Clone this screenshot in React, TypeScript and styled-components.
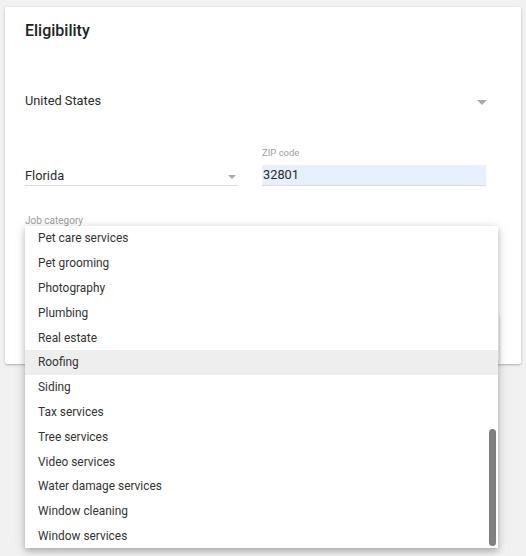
import React from "react";
import styled, { createGlobalStyle } from "styled-components";

const Global = createGlobalStyle`
  html, body { margin: 0; padding: 0; background: #f1f1f1; }
  body { font-family: Roboto, "Noto Sans", Arial, sans-serif; }
  * { box-sizing: border-box; }
`;

const Page = styled.div`
  padding: 7px 5px 0 5px;
  width: 526px;
  height: 556px;
  overflow: hidden;
`;

const Card = styled.section`
  position: relative;
  width: 516px;
  height: 357px;
  background: #fff;
  border-radius: 2px;
  box-shadow: 0 1px 3px rgba(0, 0, 0, 0.22), 0 1px 1px rgba(0, 0, 0, 0.08);
  padding: 14px 22px 0 20px;
  display: flex;
  flex-direction: column;
`;

const Title = styled.h2`
  margin: 0;
  font-size: 16px;
  line-height: 20px;
  font-weight: 500;
  color: #222;
`;

const Fields = styled.div`
  width: 463px;
  display: flex;
  flex-direction: column;
`;

const SelectBox = styled.div<{ $underline?: boolean; $width?: number }>`
  display: flex;
  align-items: center;
  justify-content: space-between;
  height: ${(p) => (p.$underline ? "21px" : "30px")};
  width: ${(p) => (p.$width ? `${p.$width}px` : "100%")};
  padding-right: ${(p) => (p.$underline ? "2px" : "1px")};
  border-bottom: 1px solid ${(p) => (p.$underline ? "#dcdcdc" : "transparent")};
  font-size: 12.8px;
  color: #2a2a2a;
`;

const Arrow = styled.span<{ $size?: number }>`
  width: 0;
  height: 0;
  margin-top: 3px;
  border-left: ${(p) => (p.$size ?? 5)}px solid transparent;
  border-right: ${(p) => (p.$size ?? 5)}px solid transparent;
  border-top: ${(p) => (p.$size ?? 5)}px solid #a9a9a9;
`;

const CountryRow = styled.div`
  margin-top: 45px;
`;

const Row = styled.div`
  margin-top: 31px;
  display: flex;
  align-items: flex-end;
  gap: 24px;
`;

const Field = styled.div<{ $width: number }>`
  width: ${(p) => p.$width}px;
  display: flex;
  flex-direction: column;
`;

const Label = styled.label`
  display: block;
  height: 12px;
  line-height: 12px;
  font-size: 9.5px;
  color: #9e9e9e;
  margin-bottom: 6px;
`;

const Input = styled.div`
  height: 21px;
  background: #e8f0fe;
  border-bottom: 1px solid #dcdcdc;
  font-size: 12.8px;
  line-height: 19px;
  color: #2a2a2a;
  padding-left: 1px;
`;

const JobField = styled.div`
  position: relative;
  margin-top: 29px;
`;

const JobLabel = styled(Label)`
  font-size: 10px;
  margin-bottom: 0;
`;

const Menu = styled.ul`
  position: absolute;
  z-index: 5;
  top: 11px;
  left: 0;
  width: 473px;
  height: 322px;
  margin: 0;
  padding: 0;
  list-style: none;
  background: #fff;
  overflow: hidden;
  box-shadow: 0 3px 6px rgba(0, 0, 0, 0.22), 0 2px 12px rgba(0, 0, 0, 0.12);
`;

const Item = styled.li<{ $active?: boolean }>`
  height: 24.8px;
  display: flex;
  align-items: center;
  padding-left: 13px;
  font-size: 11.9px;
  color: #333;
  background: ${(p) => (p.$active ? "#eeeeee" : "transparent")};
`;

const Thumb = styled.div`
  position: absolute;
  right: 2px;
  top: 203px;
  width: 7px;
  height: 117px;
  border-radius: 4px;
  background: #7f7f7f;
`;

const Footer = styled.div`
  margin-top: auto;
  display: flex;
  justify-content: flex-end;
  padding-bottom: 2px;
`;

const Button = styled.button`
  height: 47px;
  width: 110px;
  border: none;
  border-radius: 2px;
  background: #fff;
  box-shadow: 0 1px 3px rgba(0, 0, 0, 0.3);
  font-family: inherit;
  font-size: 13px;
  color: #333;
`;

const items = [
  "Pet care services",
  "Pet grooming",
  "Photography",
  "Plumbing",
  "Real estate",
  "Roofing",
  "Siding",
  "Tax services",
  "Tree services",
  "Video services",
  "Water damage services",
  "Window cleaning",
  "Window services",
];

export default function App() {
  return (
    <>
      <Global />
      <Page>
        <Card>
          <Title>Eligibility</Title>
          <Fields>
            <CountryRow>
              <SelectBox>
                <span>United States</span>
                <Arrow />
              </SelectBox>
            </CountryRow>
            <Row>
              <Field $width={213}>
                <SelectBox $underline>
                  <span>Florida</span>
                  <Arrow $size={4} />
                </SelectBox>
              </Field>
              <Field $width={224}>
                <Label>ZIP code</Label>
                <Input>32801</Input>
              </Field>
            </Row>
            <JobField>
              <JobLabel>Job category</JobLabel>
              <Menu>
                {items.map((it) => (
                  <Item key={it} $active={it === "Roofing"}>
                    {it}
                  </Item>
                ))}
                <Thumb />
              </Menu>
            </JobField>
          </Fields>
          <Footer>
            <Button>Continue</Button>
          </Footer>
        </Card>
      </Page>
    </>
  );
}
